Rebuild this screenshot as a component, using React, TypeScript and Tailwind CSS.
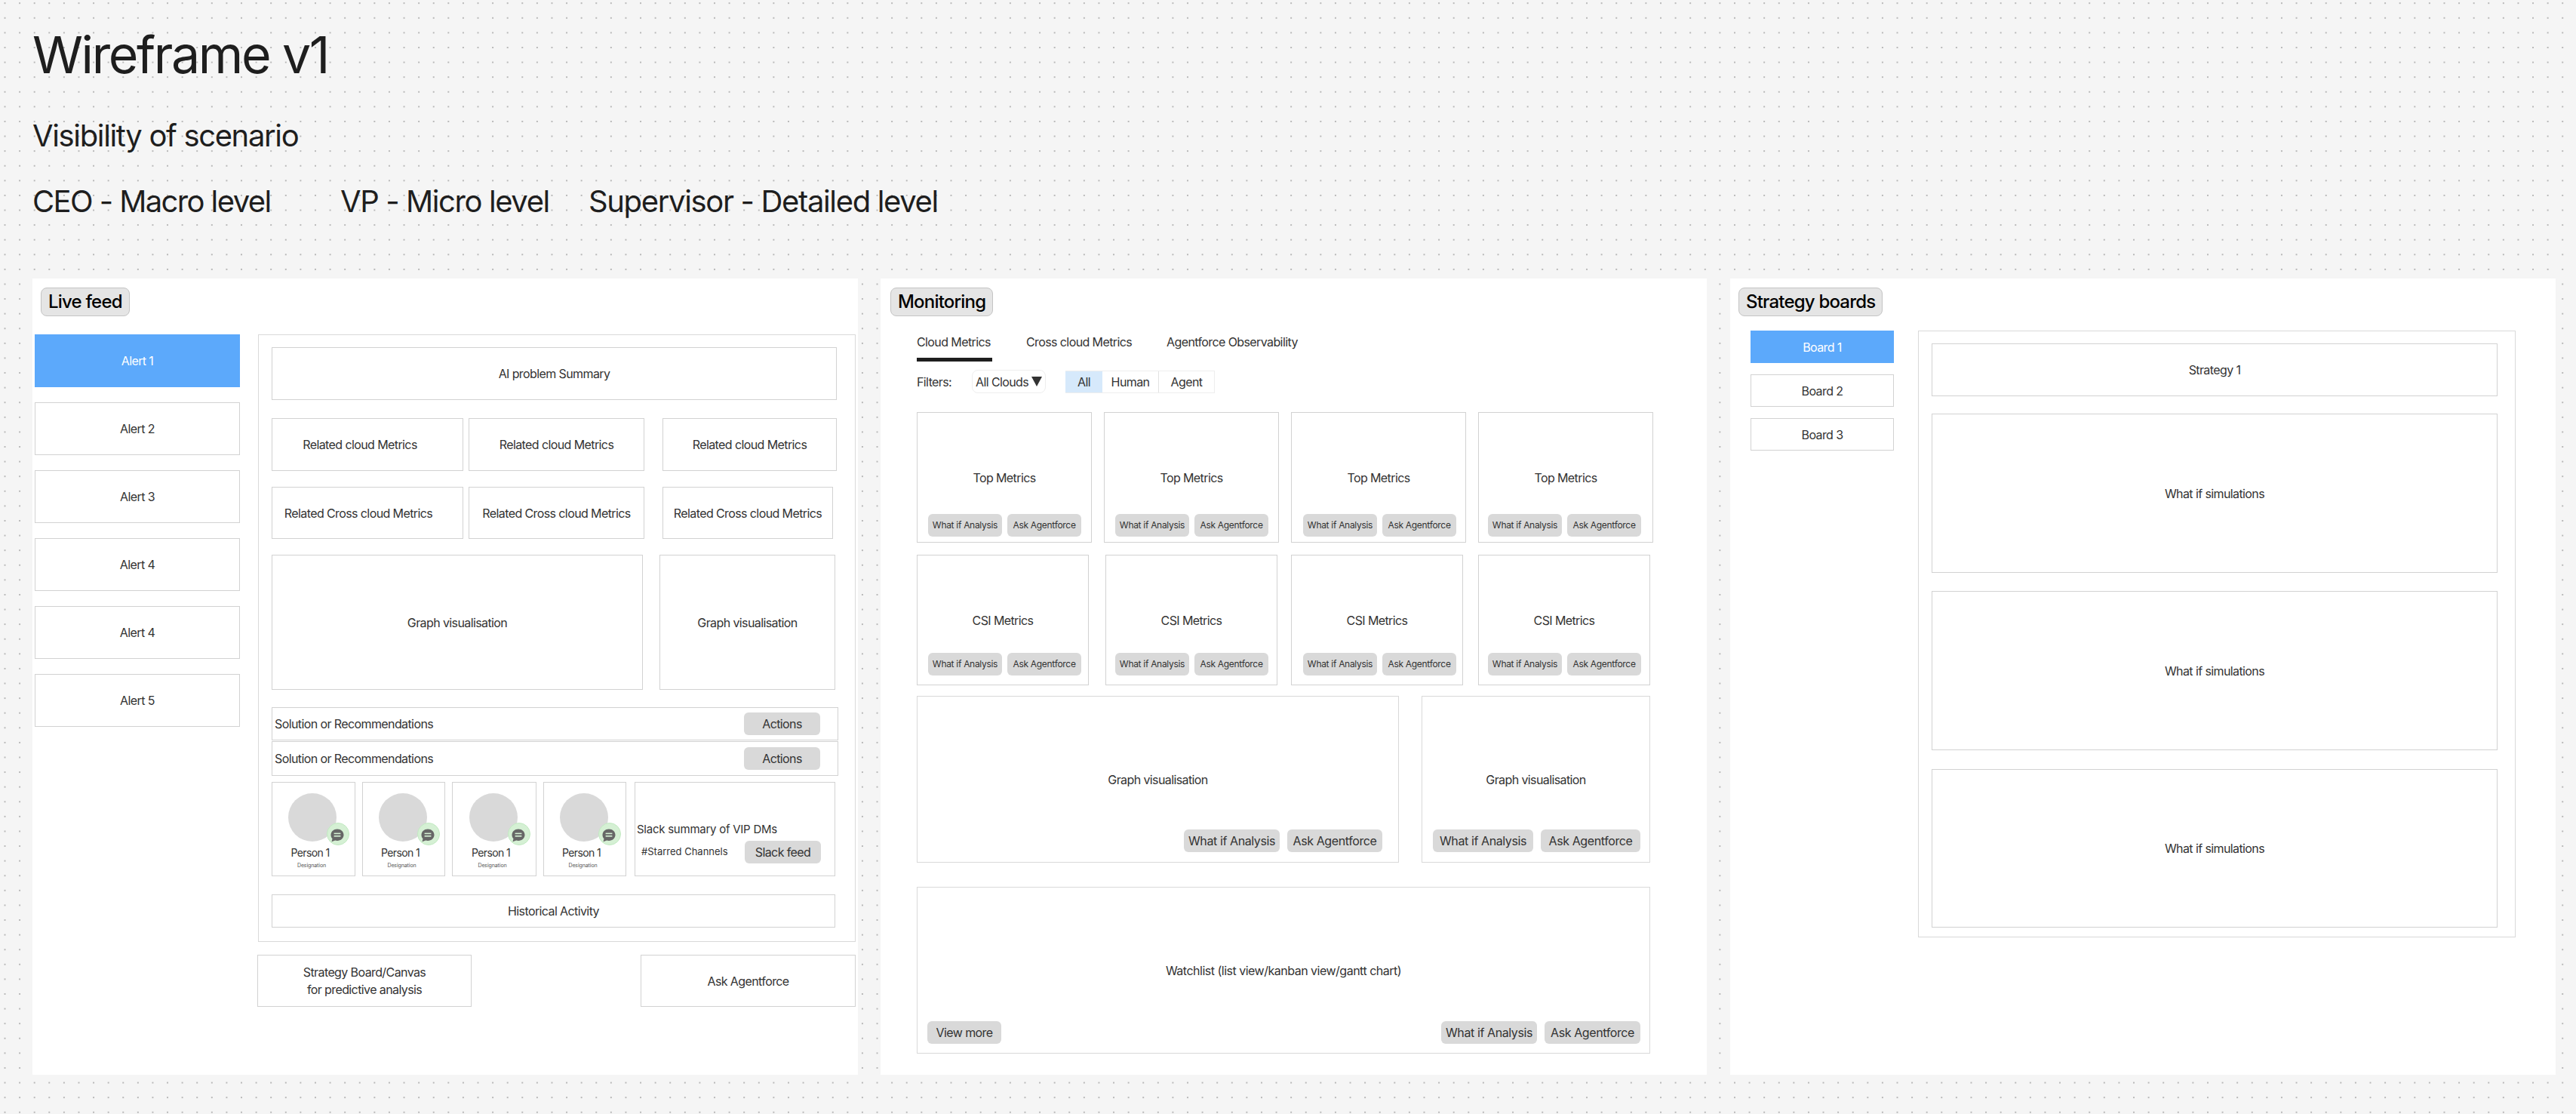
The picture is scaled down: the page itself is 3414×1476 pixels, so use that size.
const alerts = ['Alert 1', 'Alert 2', 'Alert 3', 'Alert 4', 'Alert 4', 'Alert 5']
const topCards = ['pl-[14px]', 'pl-[14px]', 'pl-[15px]', 'pl-[12px]']
const csiCards = ['pl-[14px]', 'pl-[12px]', 'pl-[15px]', 'pl-[12px]']
const people = ['w-[111px]', 'w-[110px]', 'w-[112px]', 'w-[110px]']

const Box = ({ className = '', children }: { className?: string; children?: React.ReactNode }) => (
  <div className={`flex shrink-0 items-center justify-center border border-[#d2d2d2] bg-white text-center text-[#333] ${className}`}>
    {children}
  </div>
)

const Badge = ({ label, className = '' }: { label: string; className?: string }) => (
  <div className={`flex h-[38px] w-fit items-center rounded-[8px] border border-[#c4c4c4] bg-[#e5e5e5] px-[9px] text-[24px] font-medium tracking-[-0.8px] text-black ${className}`}>
    {label}
  </div>
)

const Pill = ({ className = '', children }: { className?: string; children: React.ReactNode }) => (
  <div className={`flex h-[30px] shrink-0 items-center justify-center rounded-[6px] bg-[#d9d9d9] whitespace-nowrap text-[#333] ${className}`}>{children}</div>
)

const SmallActions = ({ className = '' }: { className?: string }) => (
  <div className={`flex gap-[7px] self-end justify-self-start [grid-area:1/1] ${className}`}>
    <Pill className="w-[98px] text-[12px] tracking-[-0.3px]">What if Analysis</Pill>
    <Pill className="w-[98px] text-[12px] tracking-[-0.3px]">Ask Agentforce</Pill>
  </div>
)

const MetricCard = ({ label, width, pad, bottom }: { label: string; width: string; pad: string; bottom: string }) => (
  <div className={`grid h-[173px] shrink-0 border border-[#d2d2d2] bg-white text-[#333] ${width}`}>
    <span className="self-center justify-self-center [grid-area:1/1]">{label}</span>
    <SmallActions className={`${pad} ${bottom}`} />
  </div>
)

const LargeActions = ({ first = 'w-[127px]', second = 'w-[126px]' }: { first?: string; second?: string }) => (
  <div className="flex gap-[10px]">
    <Pill className={`tracking-[-0.4px] ${first}`}>What if Analysis</Pill>
    <Pill className={`tracking-[-0.4px] ${second}`}>Ask Agentforce</Pill>
  </div>
)

const ChatIcon = () => (
  <svg viewBox="0 0 18 18" className="mt-[3px] mr-[2px] size-[18px]">
    <path d="M9 .5c4.7 0 8.5 3.4 8.5 7.7s-3.8 7.7-8.5 7.7c-1 0-2-.15-2.9-.45L1.5 17.2l1-3.9C1.2 11.9.5 10.1.5 8.2.5 3.9 4.3.5 9 .5z" fill="#666" />
    <rect x="4.6" y="5.6" width="8.8" height="1.6" fill="#d5f0d4" />
    <rect x="4.6" y="9" width="8.8" height="1.6" fill="#d5f0d4" />
  </svg>
)

const Person = ({ width }: { width: string }) => (
  <div className={`flex h-[125px] shrink-0 flex-col items-center border border-[#d2d2d2] bg-white pt-[14px] text-[#333] ${width}`}>
    <div className="relative mr-[3px] size-[64px] shrink-0 rounded-full bg-[#d9d9d9]">
      <div className="absolute top-[39px] left-[51px] flex size-[30px] items-center justify-center rounded-full border border-[#c2eac2] bg-[#d5f0d4]">
        <ChatIcon />
      </div>
    </div>
    <span className="mt-[4px] mr-[9px] text-[14px] leading-[22px] tracking-[-0.6px]">Person 1</span>
    <span className="mr-[5px] text-[7px] leading-[12px] tracking-[-0.1px] text-[#555]">Designation</span>
  </div>
)

const SolutionRow = ({ className = '' }: { className?: string }) => (
  <div className={`flex w-[751px] items-center justify-between border border-[#d2d2d2] bg-white pr-[23px] pl-[3px] text-[#333] ${className}`}>
    <span>Solution or Recommendations</span>
    <Pill className="w-[101px]">Actions</Pill>
  </div>
)

const LiveFeed = () => (
  <section className="h-[1055px] w-[1094px] shrink-0 bg-white pt-[12px] text-[16px] tracking-[-0.6px]">
    <Badge label="Live feed" className="ml-[11px]" />
    <div className="mt-[24px] flex items-start">
      <div className="ml-[3px] flex w-[272px] shrink-0 flex-col gap-[20px]">
        {alerts.map((alert, i) =>
          i === 0 ? (
            <div key={i} className="flex h-[70px] items-center justify-center bg-[#5ca9fb] text-white">
              {alert}
            </div>
          ) : (
            <Box key={i} className="h-[70px]">
              {alert}
            </Box>
          ),
        )}
      </div>
      <div className="ml-[24px] w-[792px] shrink-0">
        <div className="border border-[#d9d9d9] pt-[16px] pb-[18px] pl-[17px]">
          <Box className="h-[70px] w-[749px]">AI problem Summary</Box>
          <div className="mt-[24px] flex">
            <Box className="h-[70px] w-[254px] pr-[20px]">Related cloud Metrics</Box>
            <Box className="ml-[7px] h-[70px] w-[233px]">Related cloud Metrics</Box>
            <Box className="ml-[24px] h-[70px] w-[231px]">Related cloud Metrics</Box>
          </div>
          <div className="mt-[21px] flex">
            <Box className="h-[69px] w-[254px] pr-[24px]">Related Cross cloud Metrics</Box>
            <Box className="ml-[7px] h-[69px] w-[233px]">Related Cross cloud Metrics</Box>
            <Box className="ml-[24px] h-[69px] w-[226px]">Related Cross cloud Metrics</Box>
          </div>
          <div className="mt-[21px] flex">
            <Box className="h-[179px] w-[492px]">Graph visualisation</Box>
            <Box className="ml-[22px] h-[179px] w-[233px]">Graph visualisation</Box>
          </div>
          <SolutionRow className="mt-[23px] h-[44px]" />
          <SolutionRow className="mt-px h-[46px]" />
          <div className="mt-[8px] flex gap-[9px]">
            {people.map((width, i) => (
              <Person key={i} width={width} />
            ))}
            <div className="ml-[2px] flex h-[125px] w-[266px] shrink-0 flex-col border border-[#d2d2d2] bg-white pt-[50px] pl-[2px] text-[#333]">
              <span className="text-[15px] leading-[24px] tracking-[-0.25px]">Slack summary of VIP DMs</span>
              <div className="mt-[3px] flex w-[244px] items-center justify-between pl-[6px]">
                <span className="text-[13px] tracking-normal">#Starred Channels</span>
                <Pill className="w-[101px]">Slack feed</Pill>
              </div>
            </div>
          </div>
          <Box className="mt-[24px] h-[44px] w-[747px]">Historical Activity</Box>
        </div>
        <div className="mt-[17px] -ml-px flex justify-between">
          <Box className="h-[69px] w-[284px] leading-[23px]">
            Strategy Board/Canvas
            <br />
            for predictive analysis
          </Box>
          <Box className="h-[69px] w-[285px]">Ask Agentforce</Box>
        </div>
      </div>
    </div>
  </section>
)

const Monitoring = () => (
  <section className="h-[1055px] w-[1095px] shrink-0 bg-white pt-[12px] text-[16px] tracking-[-0.6px] text-[#333]">
    <Badge label="Monitoring" className="ml-[13px]" />
    <div className="ml-[48px]">
      <div className="mt-[22px] flex whitespace-nowrap">
        <div className="w-[100px]">
          <div className="leading-[24px]">Cloud Metrics</div>
          <div className="mt-[9px] h-[5px] bg-[#1e1e1e]" />
        </div>
        <span className="ml-[45px] w-[139px] leading-[24px]">Cross cloud Metrics</span>
        <span className="ml-[47px] leading-[24px]">Agentforce Observability</span>
      </div>
      <div className="mt-[11px] flex h-[31px] items-center">
        <span className="w-[73px]">Filters:</span>
        <div className="flex h-[31px] w-[98px] items-center justify-between rounded-[8px] border border-[#eeeeee] pr-[4px] pl-[4px]">
          <span>All Clouds</span>
          <span className="h-0 w-0 border-x-[7px] border-t-[13px] border-x-transparent border-t-[#333]" />
        </div>
        <div className="ml-[26px] flex h-[30px] border-t border-r border-b border-[#eeeeee]">
          <span className="flex w-[49px] items-center justify-center bg-[#d6e9fb]">All</span>
          <span className="flex w-[75px] items-center justify-center border-r border-[#e2e2e2]">Human</span>
          <span className="flex w-[73px] items-center justify-center">Agent</span>
        </div>
      </div>
      <div className="mt-[25px] flex gap-[16px]">
        {topCards.map((pad, i) => (
          <MetricCard key={i} label="Top Metrics" width="w-[232px]" pad={pad} bottom="pb-[7px]" />
        ))}
      </div>
      <div className="mt-[16px] flex">
        <MetricCard label="CSI Metrics" width="w-[228px]" pad={csiCards[0]} bottom="pb-[12px]" />
        <div className="ml-[22px]">
          <MetricCard label="CSI Metrics" width="w-[228px]" pad={csiCards[1]} bottom="pb-[12px]" />
        </div>
        <div className="ml-[18px]">
          <MetricCard label="CSI Metrics" width="w-[228px]" pad={csiCards[2]} bottom="pb-[12px]" />
        </div>
        <div className="ml-[20px]">
          <MetricCard label="CSI Metrics" width="w-[228px]" pad={csiCards[3]} bottom="pb-[12px]" />
        </div>
      </div>
      <div className="mt-[14px] flex">
        <div className="grid h-[221px] w-[639px] shrink-0 border border-[#d9d9d9]">
          <span className="self-center justify-self-center [grid-area:1/1]">Graph visualisation</span>
          <div className="self-end justify-self-end pr-[21px] pb-[13px] [grid-area:1/1]">
            <LargeActions />
          </div>
        </div>
        <div className="ml-[30px] grid h-[221px] w-[303px] shrink-0 border border-[#d9d9d9]">
          <span className="self-center justify-self-center [grid-area:1/1]">Graph visualisation</span>
          <div className="self-end justify-self-end pr-[12px] pb-[13px] [grid-area:1/1]">
            <LargeActions first="w-[133px]" second="w-[132px]" />
          </div>
        </div>
      </div>
      <div className="mt-[32px] grid h-[221px] w-[972px] border border-[#d9d9d9]">
        <span className="self-center justify-self-center tracking-[-0.5px] [grid-area:1/1]">Watchlist (list view/kanban view/gantt chart)</span>
        <div className="flex items-center justify-between self-end pr-[12px] pb-[12px] pl-[13px] [grid-area:1/1]">
          <Pill className="w-[98px]">View more</Pill>
          <LargeActions second="w-[127px]" />
        </div>
      </div>
    </div>
  </section>
)

const StrategyBoards = () => (
  <section className="h-[1055px] w-[1094px] shrink-0 bg-white pt-[12px] text-[16px] tracking-[-0.6px] text-[#333]">
    <Badge label="Strategy boards" className="ml-[11px]" />
    <div className="mt-[19px] flex items-start">
      <div className="ml-[27px] flex w-[190px] shrink-0 flex-col gap-[15px]">
        <div className="flex h-[43px] items-center justify-center bg-[#5ca9fb] text-white">Board 1</div>
        <Box className="h-[43px]">Board 2</Box>
        <Box className="h-[43px]">Board 3</Box>
      </div>
      <div className="ml-[32px] w-[792px] shrink-0 border border-[#d9d9d9] pt-[16px] pb-[12px] pl-[17px]">
        <Box className="h-[70px] w-[750px]">Strategy 1</Box>
        <Box className="mt-[23px] h-[211px] w-[750px]">What if simulations</Box>
        <Box className="mt-[24px] h-[211px] w-[750px]">What if simulations</Box>
        <Box className="mt-[25px] h-[210px] w-[750px]">What if simulations</Box>
      </div>
    </div>
  </section>
)

export default function App() {
  return (
    <div className="h-[1476px] w-[3414px] overflow-hidden bg-[#f5f5f5] bg-[radial-gradient(circle,#b8b8b8_1px,transparent_1.5px)] bg-size-[19.6px_19.6px] bg-position-[-3.3px_-5.6px] pt-[36px] font-['Inter',sans-serif]">
      <div className="pl-[43px] font-[430] text-[#1e1e1e]">
        <h1 className="text-[68px] leading-[72px] tracking-[-2.4px]">Wireframe v1</h1>
        <p className="mt-[48px] text-[40px] leading-[48px] tracking-[-1.35px]">Visibility of scenario</p>
        <div className="mt-[39px] flex text-[40px] leading-[48px] tracking-[-1.4px]">
          <span className="w-[408px] tracking-[-1.6px]">CEO - Macro level</span>
          <span className="w-[329px]">VP - Micro level</span>
          <span className="tracking-[-1.35px]">Supervisor - Detailed level</span>
        </div>
      </div>
      <div className="mt-[78px] flex pl-[43px]">
        <LiveFeed />
        <div className="ml-[30px]">
          <Monitoring />
        </div>
        <div className="ml-[31px]">
          <StrategyBoards />
        </div>
      </div>
    </div>
  )
}
